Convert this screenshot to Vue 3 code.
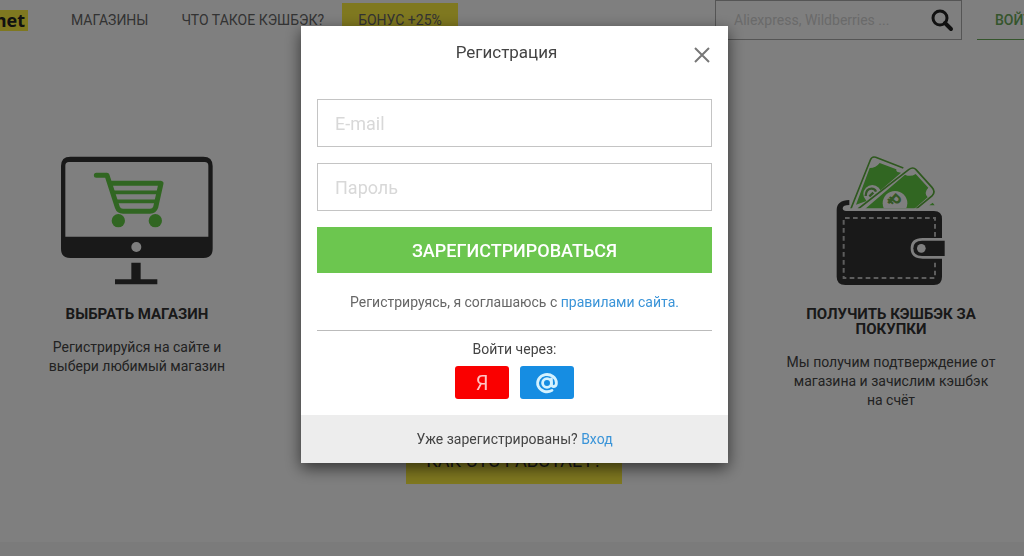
<script setup>
import { ref } from 'vue'

const email = ref('')
const password = ref('')
const query = ref('')
</script>

<template>
  <div class="page">
    <header class="topbar">
      <a class="logo" href="#">net</a>
      <nav class="nav">
        <a href="#">МАГАЗИНЫ</a>
        <a href="#">ЧТО ТАКОЕ КЭШБЭК?</a>
        <a class="bonus" href="#">БОНУС +25%</a>
      </nav>
      <form class="search" @submit.prevent>
        <input v-model="query" type="search" aria-label="Поиск магазина" placeholder="Aliexpress, Wildberries ..." />
        <button type="submit" aria-label="Найти">
          <svg viewBox="0 0 24 24" width="24" height="24">
            <circle cx="10" cy="10" r="7" fill="none" stroke="#222" stroke-width="3" />
            <path d="M15 15l6 6" stroke="#222" stroke-width="4" stroke-linecap="round" />
          </svg>
        </button>
      </form>
      <a class="login" href="#">ВОЙТИ</a>
    </header>

    <main>
      <section class="steps">
        <article class="step">
          <svg viewBox="94 45 456 393" width="152" height="131" aria-hidden="true">
            <path fill="#333" fill-rule="evenodd" d="M122 50H521Q549 50 549 78V326Q549 354 521 354H122Q94 354 94 326V78Q94 50 122 50ZM118 66Q107 66 107 77V290H536V77Q536 66 525 66Z" />
            <circle cx="320" cy="321" r="15" fill="#fff" />
            <path fill="#333" d="M305 368h28v50h50v15H256v-15h49z" />
            <g fill="none" stroke="#62cc44" stroke-width="15" stroke-linecap="round" stroke-linejoin="round">
              <path d="M200 106H232L263 202Q267 214 280 214H361Q374 214 378 202L394 130H242" />
              <path stroke-width="11" d="M250 157H386M258 184H380" />
            </g>
            <g fill="#62cc44">
              <circle cx="266" cy="242" r="20" />
              <circle cx="377" cy="242" r="20" />
            </g>
          </svg>
          <h3>ВЫБРАТЬ МАГАЗИН</h3>
          <p>Регистрируйся на сайте и выбери любимый магазин</p>
        </article>

        <article class="step">
          <svg viewBox="200 45 330 393" width="110" height="131" aria-hidden="true">
            <defs>
              <clipPath id="notes"><path d="M230 40H510V205H230z" /></clipPath>
            </defs>
            <g clip-path="url(#notes)">
              <path d="M239 218L303 57Q308 46 319 50L400 83L460 180L400 230z" fill="#fff" />
              <path d="M244 208L303 60Q308 48 319 52L402 84" fill="none" stroke="#5cb03c" stroke-width="5" />
              <path d="M260 194L301 84Q320 84 331 69L381 88Q379 98 395 98L300 180z" fill="#62cc44" />
              <circle cx="309" cy="162" r="27" fill="#fff" />
              <path d="M289 168Q290 147 305 146Q316 145 320 155M300 169L312 158" fill="none" stroke="#68b04c" stroke-width="7" />
              <path d="M262 213L416 87Q431 78 442 89L490 142Q502 156 490 168L438 214z" fill="#fff" />
              <path d="M266 207L418 89Q431 79 440 89L488 142Q500 156 488 168L440 207" fill="none" stroke="#5cb03c" stroke-width="5" />
              <path d="M287 207L407 104Q424 112 439 102L477 143Q462 158 475 172L432 209z" fill="#62cc44" />
              <circle cx="377" cy="190" r="37" fill="#fff" />
              <text x="375" y="201" fill="#68b04c" font-family="Roboto, sans-serif" font-size="52" font-weight="700" text-anchor="middle" transform="rotate(42 377 182)">₽</text>
              <path d="M480 196l10-8l6 8z" fill="#62cc44" />
            </g>
            <path fill="#333" d="M240 180V195Q221 195 220 205Q221 213 230 213H494Q518 213 518 237V294H460Q424 294 424 325Q424 356 460 356H518V410Q518 435 494 435H228Q202 435 202 410V210Q202 181 240 180Z" />
            <path fill="none" stroke="#bbb" stroke-width="6" stroke-dasharray="14 10" d="M497 290V234H223V414H497V360" />
            <path fill="#333" d="M526 302H458Q432 302 432 325Q432 348 458 348H526Z" />
            <circle cx="456" cy="325" r="13" fill="#fff" />
          </svg>
          <h3>ПОЛУЧИТЬ КЭШБЭК ЗА ПОКУПКИ</h3>
          <p>Мы получим подтверждение от магазина и зачислим кэшбэк на&nbsp;счёт</p>
        </article>
      </section>
      <a class="how" href="#">КАК ЭТО РАБОТАЕТ?</a>
    </main>
    <div class="band"></div>
  </div>

  <div class="overlay">
    <section class="modal" role="dialog" aria-modal="true" aria-labelledby="modal-title">
      <header class="modal-head">
        <h2 id="modal-title">Регистрация</h2>
        <button class="close" type="button" aria-label="Закрыть">
          <svg viewBox="0 0 16 16" width="16" height="16">
            <path d="M1 1L15 15M15 1L1 15" stroke="#777" stroke-width="2" />
          </svg>
        </button>
      </header>
      <form class="form" @submit.prevent>
        <input v-model="email" type="email" aria-label="E-mail" placeholder="E-mail" />
        <input v-model="password" type="password" aria-label="Пароль" placeholder="Пароль" />
        <button class="submit" type="submit">ЗАРЕГИСТРИРОВАТЬСЯ</button>
        <p class="terms">Регистрируясь, я соглашаюсь с <a href="#">правилами сайта.</a></p>
      </form>
      <div class="social">
        <p>Войти через:</p>
        <div class="social-row">
          <button class="yandex" type="button" aria-label="Яндекс">Я</button>
          <button class="mail" type="button" aria-label="Mail.ru">
            <svg viewBox="0 0 24 24" width="24" height="24" fill="none" stroke="#d4f2ff" stroke-width="2.8" stroke-linecap="round">
              <circle cx="12" cy="12" r="4.4" />
              <path d="M16.4 8V13.2Q16.6 15.6 18.8 15.6Q21.4 15.2 21.4 12A9.4 8.6 0 1 0 17 19.4" />
            </svg>
          </button>
        </div>
      </div>
      <footer class="modal-foot">Уже зарегистрированы? <a href="#">Вход</a></footer>
    </section>
  </div>
</template>

<style>
body {
  margin: 0;
  background: #fff;
}
</style>

<style scoped>
.page,
.overlay {
  font-family: Roboto, 'Open Sans', sans-serif;
  box-sizing: border-box;
}
.page {
  display: flex;
  flex-direction: column;
  height: 100vh;
  overflow: hidden;
  color: #444;
}
a {
  text-decoration: none;
  color: #3a94d8;
}
h2, h3, p {
  margin: 0;
}
button {
  font: inherit;
  border: 0;
  padding: 0;
  cursor: pointer;
}
input {
  box-sizing: border-box;
  font: inherit;
  border: 0;
  outline: 0;
  border-radius: 0;
  background: transparent;
}
.topbar {
  display: flex;
  align-items: center;
  height: 40px;
  flex: none;
}
.logo {
  display: flex;
  justify-content: flex-end;
  align-items: center;
  box-sizing: border-box;
  width: 28px;
  height: 21px;
  padding-right: 3px;
  background: #fff040;
  color: #222;
  font: 700 18px/20px 'Open Sans', sans-serif;
}
.nav {
  display: flex;
  align-items: center;
  margin-left: 43px;
  font-size: 14px;
  white-space: nowrap;
}
.nav a {
  color: #666;
  margin-right: 33px;
}
.nav .bonus {
  margin: 0 0 0 -15px;
  padding: 0 16px;
  line-height: 34px;
  background: #fff040;
}
.search {
  display: flex;
  align-items: center;
  box-sizing: border-box;
  width: 247px;
  height: 40px;
  margin-left: auto;
  border: 1px solid #aaa;
}
.search input {
  flex: 1;
  min-width: 0;
  padding: 0 0 0 18px;
  font-size: 14px;
}
.search input::placeholder {
  color: #d4d4d4;
  opacity: 1;
}
.search button {
  display: flex;
  margin-right: 7px;
  background: none;
}
.login {
  box-sizing: border-box;
  width: 47px;
  height: 39px;
  margin-left: 15px;
  padding-left: 18px;
  border-bottom: 1px solid #6aaa58;
  color: #6aaa58;
  font: 500 14px/38px Roboto, sans-serif;
  overflow: hidden;
}
main {
  display: flex;
  flex-direction: column;
  flex: 1;
}
.steps {
  display: flex;
  justify-content: space-between;
  padding: 115px 25px 0 29px;
}
.step {
  display: flex;
  flex-direction: column;
  align-items: center;
  width: 216px;
  text-align: center;
}
.step h3 {
  margin-top: 21px;
  color: #333;
  font-size: 15px;
  line-height: 15px;
  font-weight: 700;
}
.step p {
  margin-top: 16px;
  font-size: 14px;
  line-height: 19px;
}
.how {
  align-self: center;
  margin: 28px 0 0 4px;
  padding: 0 20px;
  background: #fff040;
  color: #333;
  font-size: 18px;
  line-height: 46px;
}
.band {
  flex: none;
  height: 14px;
  background: #f7f7f7;
}
.overlay {
  position: fixed;
  inset: 0;
  display: flex;
  align-items: flex-start;
  justify-content: center;
  padding: 26px 0 0 5px;
  background: rgba(0, 0, 0, 0.5);
  color: #444;
  font-size: 14px;
}
.modal {
  width: 427px;
  background: #fff;
  box-shadow: 0 5px 15px rgba(0, 0, 0, 0.6);
}
.modal-head {
  display: flex;
  align-items: center;
  height: 57px;
  padding: 0 18px;
}
.modal-head h2 {
  flex: 1;
  text-align: center;
  font-size: 17px;
  line-height: 53px;
  height: 57px;
  font-weight: 400;
}
.close {
  display: flex;
  background: none;
}
.form {
  display: flex;
  flex-direction: column;
  gap: 16px;
  margin: 0 16px;
  padding: 16px 0 18px;
  border-bottom: 1px solid #bbb;
}
.form input {
  height: 48px;
  padding: 0 17px;
  border: 1px solid #c4c4c4;
  font-size: 18px;
}
.form input::placeholder {
  color: #d8d8d8;
  opacity: 1;
}
.submit {
  height: 46px;
  background: #6cc64f;
  color: #fff;
  font-size: 18px;
  font-weight: 500;
}
.terms {
  margin-top: 3px;
  text-align: center;
  line-height: 20px;
  color: #666;
}
.social {
  padding: 9px 0 16px;
  text-align: center;
}
.social p {
  line-height: 19px;
}
.social-row {
  display: flex;
  justify-content: center;
  gap: 11px;
  margin-top: 7px;
}
.social-row button {
  display: flex;
  align-items: center;
  justify-content: center;
  width: 54px;
  height: 33px;
  border-radius: 3px;
}
.yandex {
  background: #fa0000;
  color: #ffc4c4;
  font-size: 20px;
}
.mail {
  background: #168de2;
}
.modal-foot {
  background: #ededed;
  line-height: 48px;
  text-align: center;
}
</style>
